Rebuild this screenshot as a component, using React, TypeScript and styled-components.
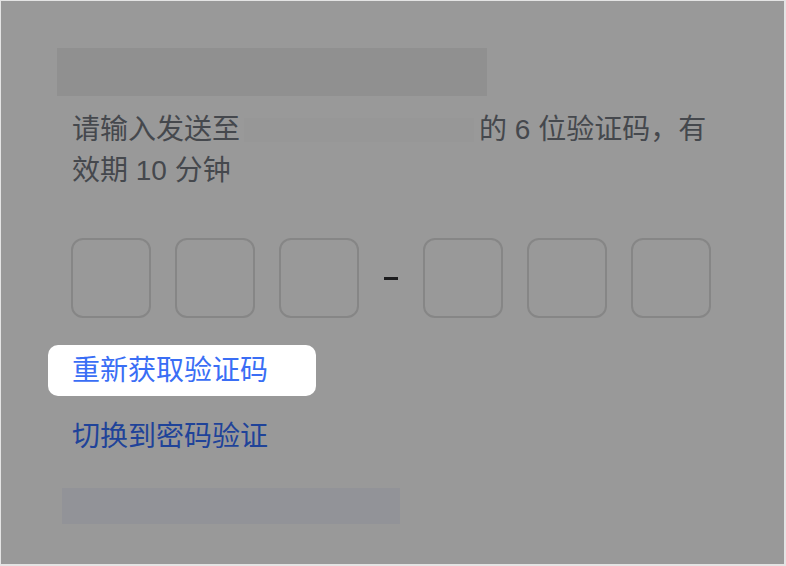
import React from "react";
import styled, { createGlobalStyle } from "styled-components";

const GlobalStyle = createGlobalStyle`
  html, body {
    margin: 0;
    padding: 0;
    background: #e4e4e4;
  }
  body {
    font-family: "Liberation Sans", "Noto Sans CJK SC", "Noto Sans", sans-serif;
  }
  #root {
    width: 786px;
    height: 566px;
  }
`;

const Frame = styled.div`
  box-sizing: border-box;
  width: 783px;
  height: 563px;
  margin: 1px 2px 2px 1px;
  background: #999999;
  display: flex;
  flex-direction: column;
  align-items: flex-start;
  overflow: hidden;
`;

const BlurBar = styled.div<{ $w: number; $h: number; $top: number; $left: number; $color: string }>`
  width: ${(p) => p.$w}px;
  height: ${(p) => p.$h}px;
  margin: ${(p) => p.$top}px 0 0 ${(p) => p.$left}px;
  background: ${(p) => p.$color};
  flex-shrink: 0;
`;

const Description = styled.p`
  margin: 13px 0 0 71px;
  width: 650px;
  font-size: 28px;
  line-height: 41px;
  color: #45484d;
`;

const Redacted = styled.span`
  display: inline-block;
  width: 230px;
  height: 24px;
  margin: 0 5px 0 4px;
  vertical-align: -3px;
  background: #979797;
`;

const CodeRow = styled.div`
  display: flex;
  align-items: center;
  gap: 24px;
  margin: 47px 0 0 70px;
`;

const CodeBox = styled.div`
  box-sizing: border-box;
  width: 80px;
  height: 80px;
  border: 2px solid #868686;
  border-radius: 12px;
`;

const Dash = styled.div`
  width: 14px;
  height: 3px;
  margin: 0 1px;
  background: #1c1c1e;
`;

const Highlight = styled.div`
  box-sizing: border-box;
  width: 268px;
  height: 51px;
  margin: 27px 0 0 47px;
  padding-left: 24px;
  border-radius: 10px;
  background: #ffffff;
  display: flex;
  align-items: center;
`;

const LinkText = styled.span<{ $color: string }>`
  font-size: 28px;
  line-height: 41px;
  color: ${(p) => p.$color};
  white-space: nowrap;
`;

const SwitchLink = styled.div`
  margin: 20px 0 0 71px;
  display: flex;
`;

export default function App() {
  return (
    <>
      <GlobalStyle />
      <Frame>
        <BlurBar $w={430} $h={48} $top={47} $left={56} $color="#909090" />
        <Description>
          请输入发送至<Redacted />的 6 位验证码，有效期 10 分钟
        </Description>
        <CodeRow>
          <CodeBox />
          <CodeBox />
          <CodeBox />
          <Dash />
          <CodeBox />
          <CodeBox />
          <CodeBox />
        </CodeRow>
        <Highlight>
          <LinkText $color="#3a6ef5">重新获取验证码</LinkText>
        </Highlight>
        <SwitchLink>
          <LinkText $color="#1f4399">切换到密码验证</LinkText>
        </SwitchLink>
        <BlurBar $w={338} $h={36} $top={31} $left={61} $color="#929398" />
      </Frame>
    </>
  );
}
